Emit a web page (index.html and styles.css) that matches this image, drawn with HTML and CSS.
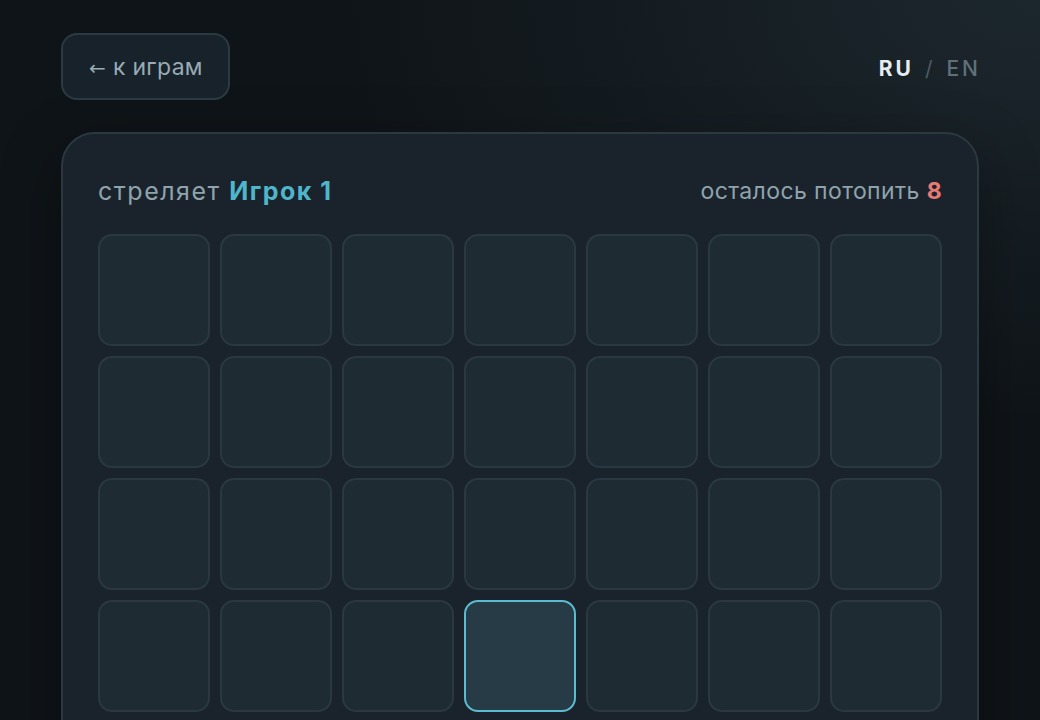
FILE: index.html
```html
<!DOCTYPE html>
<html lang="ru">
<head>
<meta charset="utf-8">
<title>Морской бой</title>
<link rel="stylesheet" href="styles.css">
</head>
<body>
<div class="page">
  <header class="topbar">
    <button class="back"><span class="arrow">←</span> к играм</button>
    <div class="lang"><span class="lang-active">RU</span><span class="lang-sep">/</span><span class="lang-other">EN</span></div>
  </header>
  <main class="card">
    <div class="status">
      <div class="turn">стреляет <span class="player">Игрок 1</span></div>
      <div class="left">осталось потопить <span class="count">8</span></div>
    </div>
    <div class="grid">
      <div class="cell"></div><div class="cell"></div><div class="cell"></div><div class="cell"></div><div class="cell"></div><div class="cell"></div><div class="cell"></div>
      <div class="cell"></div><div class="cell"></div><div class="cell"></div><div class="cell"></div><div class="cell"></div><div class="cell"></div><div class="cell"></div>
      <div class="cell"></div><div class="cell"></div><div class="cell"></div><div class="cell"></div><div class="cell"></div><div class="cell"></div><div class="cell"></div>
      <div class="cell"></div><div class="cell"></div><div class="cell"></div><div class="cell cell-active"></div><div class="cell"></div><div class="cell"></div><div class="cell"></div>
      <div class="cell"></div><div class="cell"></div><div class="cell"></div><div class="cell"></div><div class="cell"></div><div class="cell"></div><div class="cell"></div>
    </div>
  </main>
</div>
</body>
</html>
```

FILE: styles.css
```css
* { box-sizing: border-box; }
html, body { margin: 0; height: 100%; }
body {
  font-family: Inter, "Noto Sans", sans-serif;
  color: #8fa3ad;
  background:
    radial-gradient(ellipse 700px 420px at 100% 0%, #1c272d 0%, rgba(28,39,45,0) 100%),
    #0f1418;
  overflow: hidden;
}
.page {
  padding: 33px 61px 0 61px;
}
.topbar {
  display: flex;
  justify-content: space-between;
  align-items: center;
  margin-bottom: 32px;
}
.back {
  height: 67px;
  width: 169px;
  border-radius: 16px;
  border: 2px solid #2b3a42;
  background: #18222a;
  color: #97abb5;
  font-family: inherit;
  font-size: 23px;
  letter-spacing: 0.3px;
  padding: 1px 0 0 1px;
  cursor: pointer;
}
.arrow {
  font-family: "DejaVu Sans", sans-serif;
  font-size: 20px;
}
.lang {
  font-size: 21px;
  letter-spacing: 3px;
  display: flex;
  gap: 11px;
  margin-top: 3px;
}
.lang-active { color: #e6edf0; font-weight: 700; }
.lang-sep { color: #4c5b63; }
.lang-other { color: #5f707a; font-weight: 500; margin-right: -2px; }
.card {
  background: #1a232b;
  border: 2px solid #2a3840;
  border-radius: 34px;
  padding: 40px 35px 40px 35px;
  box-shadow: 0 20px 60px rgba(0,0,0,0.35);
}
.status {
  display: flex;
  justify-content: space-between;
  align-items: center;
  line-height: 34px;
  margin-bottom: 26px;
}
.turn { font-size: 25px; letter-spacing: 1.5px; }
.player { color: #4fb5ca; font-weight: 700; }
.count { color: #e87a74; font-weight: 700; }
.left { font-size: 23px; letter-spacing: 0.4px; }
.grid {
  display: grid;
  grid-template-columns: repeat(7, 112px);
  grid-auto-rows: 112px;
  gap: 10px;
}
.cell {
  background: #1f2b33;
  border: 2px solid #2a3841;
  border-radius: 14px;
}
.cell-active {
  background: #263b46;
  border-color: #5bbbd0;
}
```
